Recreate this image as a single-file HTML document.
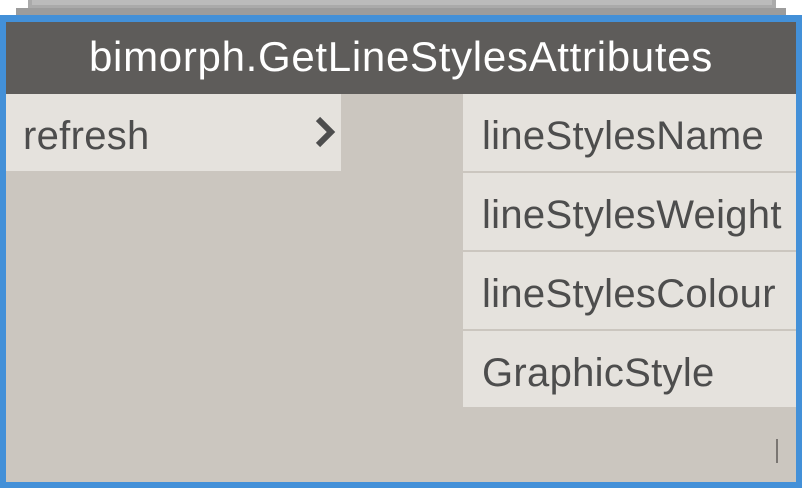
<!DOCTYPE html>
<html><head><style>
*{margin:0;padding:0;box-sizing:border-box}
body{width:802px;height:488px;background:#fff;position:relative;overflow:hidden;font-family:"Liberation Sans",sans-serif}
.a{position:absolute}
.row{position:absolute;background:#e5e2dd;color:#4d4d4d;font-size:40px;line-height:84px;letter-spacing:0.3px;white-space:nowrap;overflow:hidden}
</style></head><body>
<div class="a" style="left:28px;top:0;width:748px;height:8px;background:#aaa"></div>
<div class="a" style="left:32px;top:0;width:740px;height:5px;background:#bbb"></div>
<div class="a" style="left:16px;top:8px;width:770px;height:7px;background:#9c9c9c"></div>
<div class="a" style="left:0;top:15px;width:802px;height:473px;background:#4390d8"></div>
<div class="a" style="left:6px;top:22px;width:790px;height:460px;background:#cbc6bf"></div>
<div class="a" style="left:6px;top:22px;width:790px;height:72px;background:#5e5c5a;color:#fff;font-size:42px;line-height:70px;letter-spacing:0.7px;text-align:center;white-space:nowrap">bimorph.GetLineStylesAttributes</div>
<div class="row" style="left:6px;top:94px;width:335px;height:77px;padding-left:17px">refresh</div>
<svg class="a" style="left:312px;top:114px" width="28" height="36"><path d="M6 5 L19 18 L6 31" stroke="#4d4d4d" stroke-width="6" fill="none"/></svg>
<div class="row" style="left:463px;top:94px;width:333px;height:77px;padding-left:19px">lineStylesName</div>
<div class="row" style="left:463px;top:173px;width:333px;height:77px;padding-left:19px">lineStylesWeight</div>
<div class="row" style="left:463px;top:252px;width:333px;height:77px;padding-left:19px">lineStylesColour</div>
<div class="row" style="left:463px;top:331px;width:333px;height:76px;padding-left:19px">GraphicStyle</div>
<div class="a" style="left:776px;top:439px;width:2px;height:24px;background:#7a7672"></div>
</body></html>
